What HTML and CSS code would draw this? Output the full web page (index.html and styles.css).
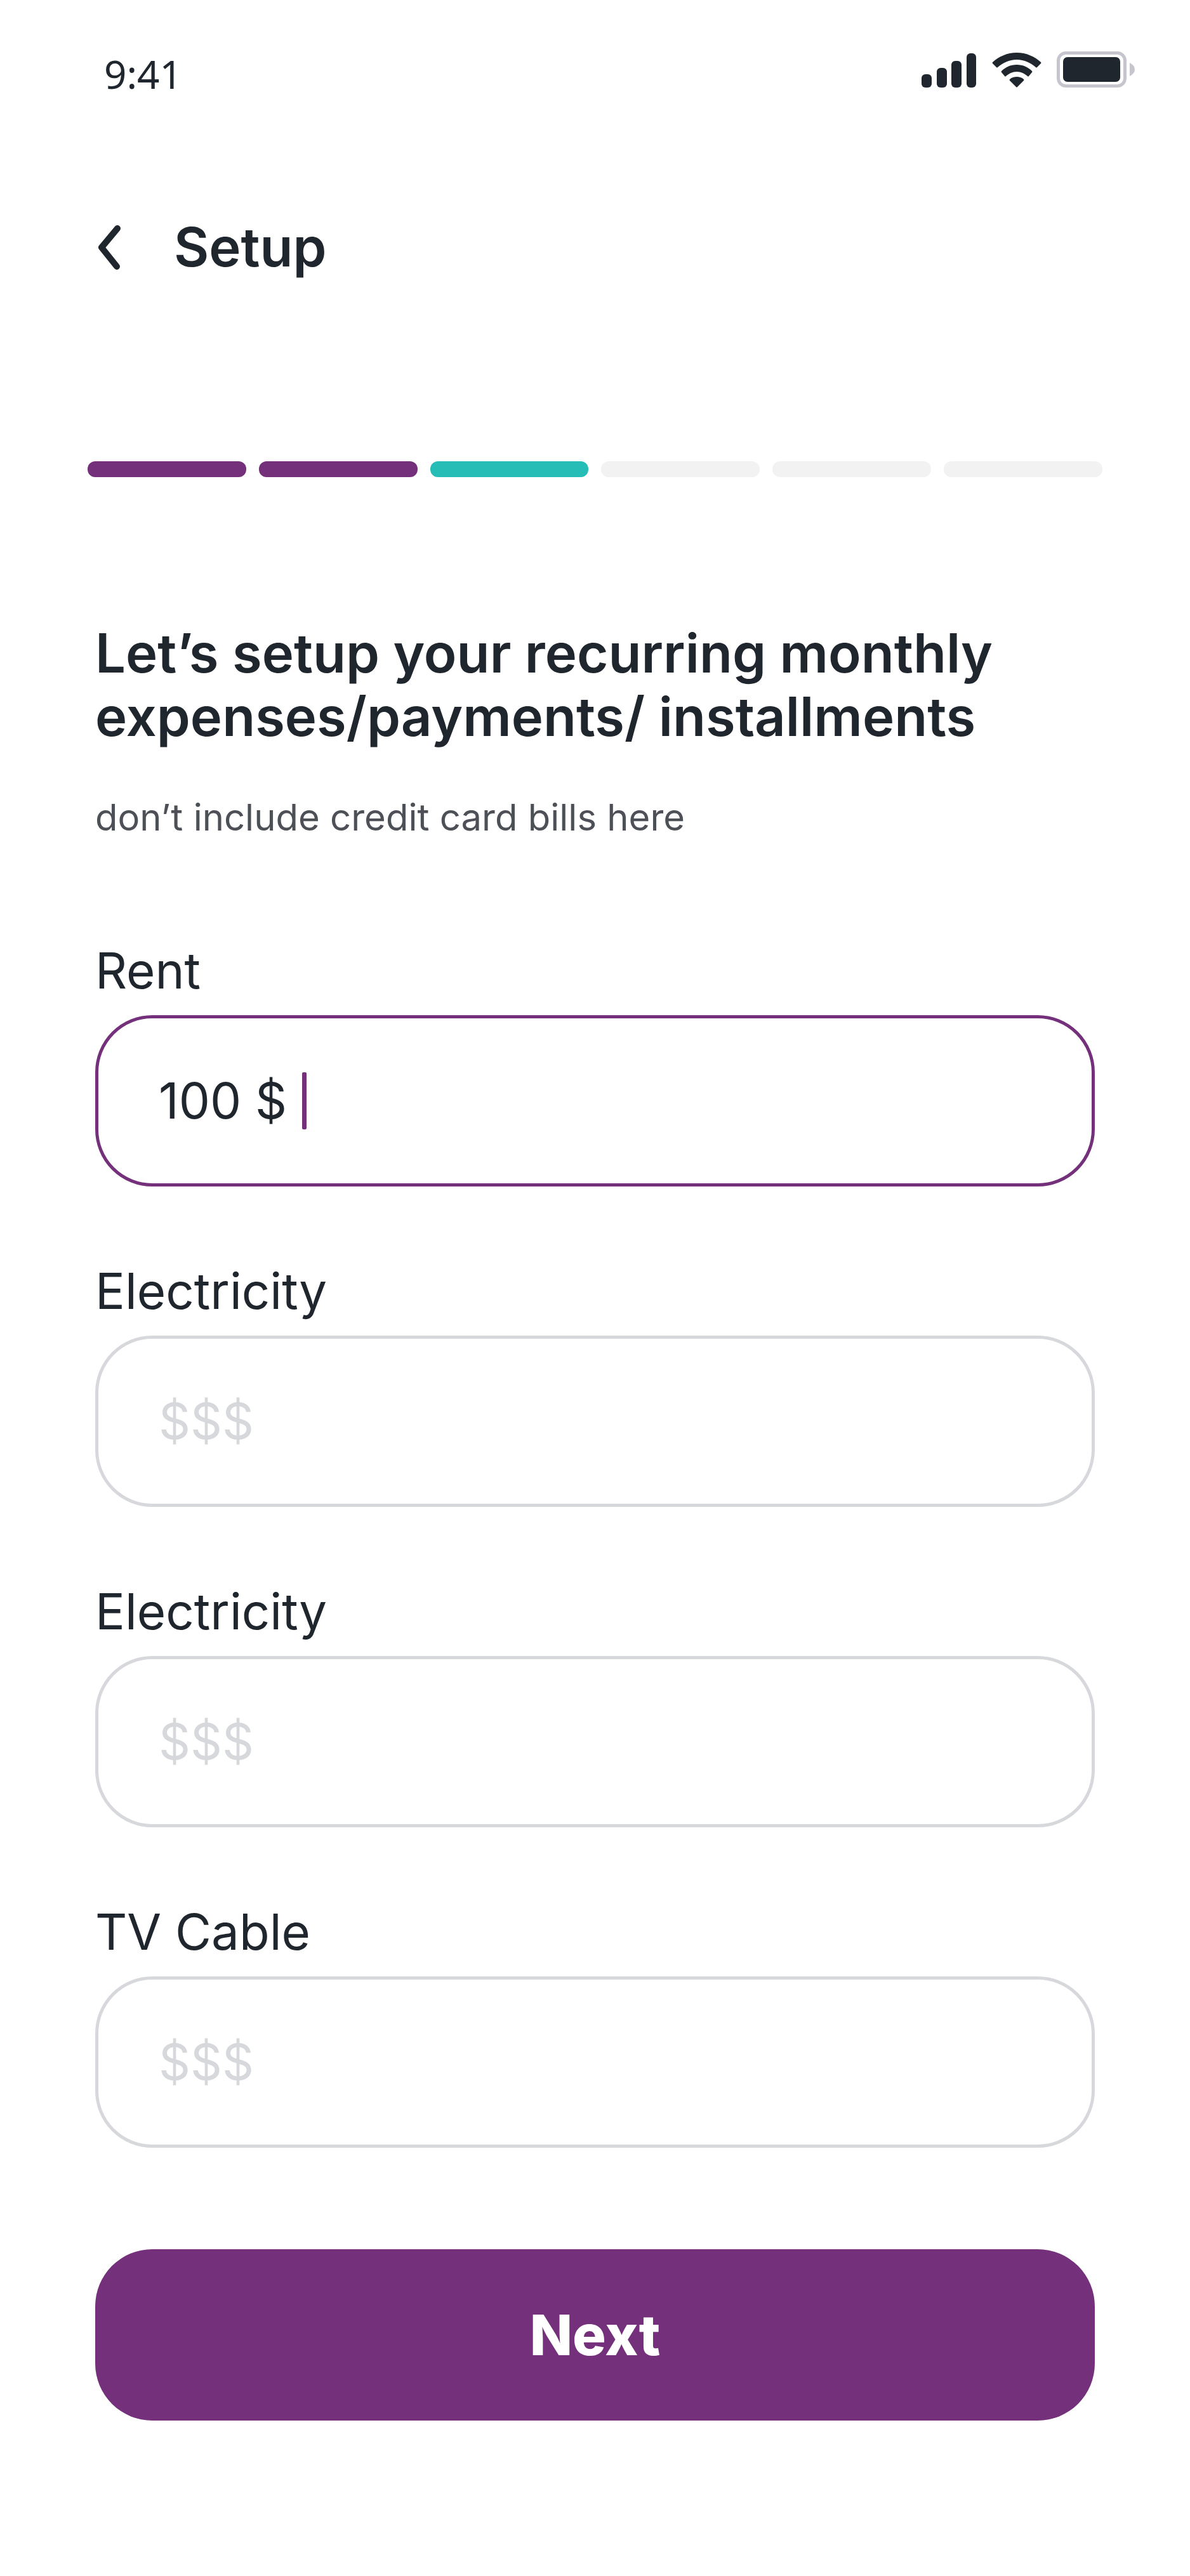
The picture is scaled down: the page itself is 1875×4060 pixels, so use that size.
FILE: index.html
```html
<!DOCTYPE html>
<html lang="en">

<head>
    <meta charset="UTF-8">
    <meta name="viewport" content="width=device-width, initial-scale=1.0">
    <title>Setup</title>
    <link rel="stylesheet" href="styles.css">
</head>

<body>
    <div class="status-bar">
        <span class="status-bar__time">9:41</span>
        <div class="status-bar__icons">
            <svg width="87" height="58" viewBox="0 0 87 58" fill="currentColor" aria-label="Signal">
                <rect x="0" y="36" width="16" height="21" rx="6" />
                <rect x="24" y="26" width="16" height="31" rx="6" />
                <rect x="47" y="15" width="16" height="42" rx="6" />
                <rect x="71" y="3" width="15" height="54" rx="6" />
            </svg>
            <svg width="78" height="58" viewBox="0 0 78 58" fill="currentColor" aria-label="Wi-Fi">
                <path d="M39 2C54 2 67 8 77 17Q78 18 77 19L71 25Q70 26 69 25C61 18 51 13 39 13S17 18 9 25Q8 26 7 25L1 19Q0 18 1 17C11 8 24 2 39 2Z" />
                <path d="M39 21C49 21 57 25 63 31Q64 32 63 33L58 39Q57 40 56 39C51 35 46 32 39 32S27 35 22 39Q21 40 20 39L15 33Q14 32 15 31C21 25 29 21 39 21Z" />
                <path d="M39 40C43 40 47 41 50 44Q51 45 50 46L40 56Q39 57 38 56L28 46Q27 45 28 44C31 41 35 40 39 40Z" />
            </svg>
            <svg class="battery" width="124" height="58" viewBox="0 0 124 58" aria-label="Battery">
                <rect x="2.5" y="2.5" width="105" height="52" rx="12" fill="none" stroke="#c6c5cd" stroke-width="5" />
                <rect x="10" y="9" width="90" height="39" rx="7" fill="currentColor" />
                <path d="M115 18Q123 22 123 28.500T115 39Z" fill="#c6c5cd" />
            </svg>
        </div>
    </div>

    <header class="header">
        <button class="back" type="button" aria-label="Back">
            <svg width="46" height="70" viewBox="-5 0 46 70" fill="none" stroke="currentColor" stroke-width="10"
                stroke-linecap="round" stroke-linejoin="round">
                <path d="M30 5L5 35L29 65" />
            </svg>
        </button>
        <h1>Setup</h1>
    </header>

    <main>
        <div class="progress">
            <span class="progress__step progress__step--done"></span>
            <span class="progress__step progress__step--done"></span>
            <span class="progress__step progress__step--current"></span>
            <span class="progress__step"></span>
            <span class="progress__step"></span>
            <span class="progress__step"></span>
        </div>

        <h2>Let’s setup your recurring monthly<br>expenses/payments/ installments</h2>
        <p class="hint">don’t include credit card bills here</p>

        <form>
            <div class="input-container">
                <label for="rent">Rent</label>
                <div class="input-box input-box--active">
                    <input id="rent" type="text" value="100 $">
                    <span class="caret"></span>
                </div>
            </div>

            <div class="input-container">
                <label for="electricity">Electricity</label>
                <div class="input-box">
                    <input id="electricity" type="text" placeholder="$$$">
                </div>
            </div>

            <div class="input-container">
                <label for="electricity-2">Electricity</label>
                <div class="input-box">
                    <input id="electricity-2" type="text" placeholder="$$$">
                </div>
            </div>

            <div class="input-container">
                <label for="tv-cable">TV Cable</label>
                <div class="input-box">
                    <input id="tv-cable" type="text" placeholder="$$$">
                </div>
            </div>

            <button class="next" type="submit">Next</button>
        </form>
    </main>
</body>

</html>
```
FILE: styles.css
```css
* {
    box-sizing: border-box;
}

body {
    margin: 0;
    background-color: #fff;
    color: #20262d;
    font-family: Inter, Roboto, "Liberation Sans", sans-serif;
}

h1,
h2,
p {
    margin: 0;
}

button,
input {
    font: inherit;
    color: inherit;
}

.status-bar {
    display: flex;
    justify-content: space-between;
    padding: 76px 86px 0 164px;
}

.status-bar__time {
    font-family: "Noto Sans", sans-serif;
    font-size: 62px;
    line-height: 80px;
}

.status-bar__icons {
    display: flex;
    gap: 24px;
    padding-top: 5px;
}

.header {
    display: flex;
    align-items: center;
    gap: 78px;
    padding: 184px 8% 0;
}

.back {
    display: flex;
    padding: 0;
    border: none;
    background: none;
    cursor: pointer;
}

h1,
h2 {
    font-size: 85px;
    font-weight: 600;
    line-height: 100px;
}

main {
    padding: 287px 8% 0;
}

.progress {
    display: flex;
    gap: 20px;
    margin: 0 -12px;
}

.progress__step {
    flex: 1;
    height: 25px;
    border-radius: 12px;
    background-color: #f2f2f3;
}

.progress__step--done {
    background-color: #75307b;
}

.progress__step--current {
    background-color: #25bdb5;
}

h2 {
    margin-top: 228px;
}

.hint {
    margin-top: 68px;
    color: #4d5157;
    font-size: 58px;
    line-height: 80px;
}

form {
    display: flex;
    flex-direction: column;
    gap: 115px;
    padding: 152px 0 245px;
}

.input-container {
    display: flex;
    flex-direction: column;
    gap: 20px;
}

.input-container label {
    font-size: 78px;
    line-height: 100px;
}

.input-box {
    display: flex;
    align-items: center;
    height: 270px;
    padding: 0 95px;
    border: 5px solid #d7d8dc;
    border-radius: 90px;
}

.input-box input {
    width: 100%;
    padding: 0;
    border: none;
    outline: none;
    background: none;
    font-size: 78px;
    line-height: 100px;
}

.input-box input::placeholder {
    color: #d7d8dc;
    opacity: 1;
}

.input-box--active {
    gap: 24px;
    border-color: #75307b;
}

.input-box--active input {
    width: auto;
    field-sizing: content;
}

.caret {
    width: 7px;
    height: 90px;
    border-radius: 2px;
    background-color: #75307b;
}

.next {
    height: 270px;
    margin-top: 45px;
    border: none;
    border-radius: 90px;
    background-color: #75307b;
    color: #fff;
    font-size: 88px;
    font-weight: 800;
    cursor: pointer;
}
```
